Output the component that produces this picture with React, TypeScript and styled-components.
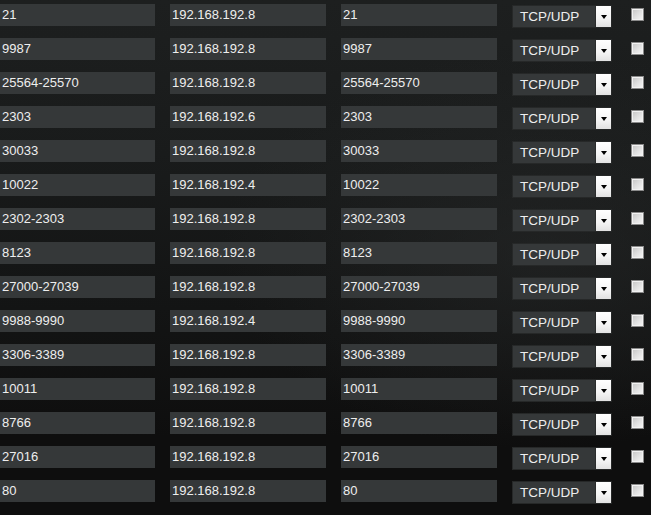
import React from "react";
import styled, { createGlobalStyle } from "styled-components";

type Rule = { ext: string; ip: string; int: string };

const rules: Rule[] = [
    { ext: "21", ip: "192.168.192.8", int: "21" },
    { ext: "9987", ip: "192.168.192.8", int: "9987" },
    { ext: "25564-25570", ip: "192.168.192.8", int: "25564-25570" },
    { ext: "2303", ip: "192.168.192.6", int: "2303" },
    { ext: "30033", ip: "192.168.192.8", int: "30033" },
    { ext: "10022", ip: "192.168.192.4", int: "10022" },
    { ext: "2302-2303", ip: "192.168.192.8", int: "2302-2303" },
    { ext: "8123", ip: "192.168.192.8", int: "8123" },
    { ext: "27000-27039", ip: "192.168.192.8", int: "27000-27039" },
    { ext: "9988-9990", ip: "192.168.192.4", int: "9988-9990" },
    { ext: "3306-3389", ip: "192.168.192.8", int: "3306-3389" },
    { ext: "10011", ip: "192.168.192.8", int: "10011" },
    { ext: "8766", ip: "192.168.192.8", int: "8766" },
    { ext: "27016", ip: "192.168.192.8", int: "27016" },
    { ext: "80", ip: "192.168.192.8", int: "80" },
];

const GlobalStyle = createGlobalStyle`
    html, body {
        margin: 0;
        padding: 0;
        height: 100%;
        overflow: hidden;
    }
    body {
        background: #0f0f0f;
        font-family: "Liberation Sans", Arial, sans-serif;
    }
`;

const Page = styled.div`
    width: 651px;
    height: 515px;
    box-sizing: border-box;
    padding-top: 4px;
    background:
        radial-gradient(ellipse 320px 200px at 540px 250px, rgba(40, 42, 42, 0.55), rgba(40, 42, 42, 0) 100%),
        linear-gradient(to bottom, #1d1f1f 0%, #191b1b 30%, #131414 60%, #0e0e0e 85%, #0e0e0e 100%);
    display: flex;
    flex-direction: column;
    gap: 12px;
`;

const Row = styled.div`
    display: flex;
    align-items: flex-start;
    height: 22px;
`;

const Field = styled.div<{ $w: number; $gap?: number }>`
    width: ${p => p.$w}px;
    height: 22px;
    margin-right: ${p => p.$gap ?? 15}px;
    background: #353839;
    color: #eeeeee;
    font-size: 13px;
    line-height: 22px;
    padding-left: 2px;
    box-sizing: border-box;
    white-space: nowrap;
    overflow: hidden;
`;

const Select = styled.div`
    width: 100px;
    height: 23px;
    margin-top: 1px;
    margin-right: 19px;
    box-sizing: border-box;
    background: #353839;
    border: 1px solid #262828;
    display: flex;
    color: #eeeeee;
    font-size: 13.5px;
`;

const SelectLabel = styled.span`
    flex: 1;
    padding-left: 7px;
    line-height: 21px;
`;

const SelectButton = styled.span`
    width: 15px;
    height: 21px;
    background: linear-gradient(to bottom, #ffffff 0%, #f4f4f4 60%, #e2e2e2 100%);
    border-left: 1px solid #2a2c2c;
    display: flex;
    align-items: center;
    justify-content: center;
`;

const Arrow = styled.span`
    width: 0;
    height: 0;
    border-left: 3.5px solid transparent;
    border-right: 3.5px solid transparent;
    border-top: 4px solid #000;
    margin-top: 1px;
`;

const Check = styled.span`
    width: 13px;
    height: 13px;
    margin-top: 4px;
    box-sizing: border-box;
    border: 1px solid #8a8a8a;
    background: linear-gradient(135deg, #c4c4c4 0%, #e2e2e2 55%, #f6f6f6 100%);
    box-shadow: inset 0 0 0 1px #f2f2f2;
`;

const App = () => (
    <>
        <GlobalStyle />
        <Page>
            {rules.map((r, i) => (
                <Row key={i}>
                    <Field $w={155}>{r.ext}</Field>
                    <Field $w={156}>{r.ip}</Field>
                    <Field $w={156}>{r.int}</Field>
                    <Select>
                        <SelectLabel>TCP/UDP</SelectLabel>
                        <SelectButton>
                            <Arrow />
                        </SelectButton>
                    </Select>
                    <Check />
                </Row>
            ))}
        </Page>
    </>
);

export default App;
